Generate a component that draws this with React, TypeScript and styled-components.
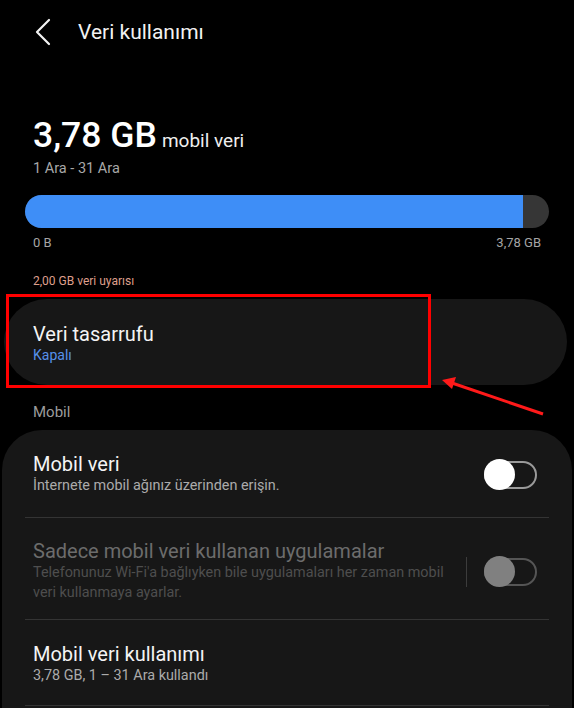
import React from 'react'
import styled, { createGlobalStyle } from 'styled-components'

const GlobalStyle = createGlobalStyle`
  html, body {
    margin: 0;
    padding: 0;
    background: #000;
  }
  body {
    font-family: Roboto, "Noto Sans", "Liberation Sans", sans-serif;
    color: #fff;
  }
`

const Screen = styled.div`
  position: relative;
  width: 574px;
  height: 708px;
  overflow: hidden;
  background: #000;
`

const Header = styled.div`
  display: flex;
  align-items: center;
  height: 64px;
  padding-left: 34px;
  gap: 26px;
`

const BackIcon = styled.svg`
  width: 18px;
  height: 28px;
`

const HeaderTitle = styled.h1`
  margin: 0;
  font-size: 21px;
  font-weight: 400;
  color: #f2f2f2;
`

const Summary = styled.div`
  padding: 51px 25px 0;
`

const Amount = styled.div`
  display: flex;
  align-items: baseline;
  gap: 5px;
  padding-left: 8px;
  height: 40px;
  line-height: 40px;
`

const Big = styled.span`
  font-size: 35.5px;
  font-weight: 500;
`

const Unit = styled.span`
  font-size: 19px;
  color: #eee;
`

const Period = styled.div`
  padding-left: 8px;
  margin-top: 5px;
  font-size: 14.5px;
  line-height: 18px;
  color: #a8a8a8;
`

const Bar = styled.div`
  display: flex;
  height: 33px;
  margin-top: 17px;
  border-radius: 17px;
  overflow: hidden;
  background: #363636;
`

const Fill = styled.div`
  height: 100%;
  background: #3e8ef7;
`

const Scale = styled.div`
  display: flex;
  justify-content: space-between;
  padding: 0 8px;
  margin-top: 6px;
  font-size: 13px;
  line-height: 18px;
  color: #a5a5a5;
`

const Warning = styled.div`
  padding-left: 8px;
  margin-top: 21px;
  font-size: 12px;
  line-height: 16px;
  color: #df9f8c;
`

const SaverCard = styled.div`
  margin: 10px 7px 0 4px;
  padding: 23px 29px 21px;
  border-radius: 43px;
  background: #171717;
`

const SaverTitle = styled.div`
  font-size: 20px;
  line-height: 24px;
  color: #f4f4f4;
`

const SaverState = styled.div`
  font-size: 14px;
  line-height: 18px;
  color: #5690ea;
`

const SectionLabel = styled.div`
  margin-top: 17px;
  padding-left: 33px;
  font-size: 15px;
  line-height: 20px;
  color: #9c9c9c;
`

const Card = styled.div`
  margin: 8px 2px 0;
  border-radius: 40px 40px 0 0;
  background: #171717;
  padding-bottom: 40px;
`

const Row = styled.div<{ $top: number; $bottom: number }>`
  display: flex;
  align-items: center;
  padding: ${p => p.$top}px 35px ${p => p.$bottom}px 31px;
`

const RowText = styled.div`
  flex: 1;
`

const RowTitle = styled.div<{ $dim?: boolean }>`
  font-size: 20px;
  line-height: 22px;
  color: ${p => (p.$dim ? '#6c6c6c' : '#f4f4f4')};
`

const RowSub = styled.div<{ $dim?: boolean }>`
  margin-top: 1px;
  font-size: 14.4px;
  line-height: 20px;
  color: ${p => (p.$dim ? '#4e4e4e' : '#ababab')};
`

const Divider = styled.div`
  height: 1px;
  margin: 0 23px;
  background: #343434;
`

const VLine = styled.div`
  width: 1px;
  height: 30px;
  margin: 0 17px 0 14px;
  background: #3c3c3c;
`

const Track = styled.div<{ $dim?: boolean }>`
  position: relative;
  width: 49px;
  height: 24px;
  border: 2px solid ${p => (p.$dim ? '#555' : '#9a9a9a')};
  border-radius: 14px;
`

const Thumb = styled.div<{ $dim?: boolean }>`
  position: absolute;
  left: -2px;
  top: -4px;
  width: 31px;
  height: 31px;
  border-radius: 50%;
  background: ${p => (p.$dim ? '#808080' : '#fff')};
`

const Highlight = styled.div`
  position: absolute;
  left: 6px;
  top: 294px;
  width: 419px;
  height: 88px;
  border: 3px solid #ff0000;
`

const Arrow = styled.svg`
  position: absolute;
  left: 0;
  top: 0;
  pointer-events: none;
`

const Toggle = ({ dim }: { dim?: boolean }) => (
  <Track $dim={dim}>
    <Thumb $dim={dim} />
  </Track>
)

export default function App() {
  const used = 95
  return (
    <Screen>
      <GlobalStyle />
      <Header>
        <BackIcon viewBox="0 0 18 28">
          <path d="M15 2 L3 14 L15 26" fill="none" stroke="#f2f2f2" strokeWidth="2.2" strokeLinecap="round" strokeLinejoin="round" />
        </BackIcon>
        <HeaderTitle>Veri kullanımı</HeaderTitle>
      </Header>

      <Summary>
        <Amount>
          <Big>3,78 GB</Big>
          <Unit>mobil veri</Unit>
        </Amount>
        <Period>1 Ara - 31 Ara</Period>
        <Bar>
          <Fill style={{ width: `${used}%` }} />
        </Bar>
        <Scale>
          <span>0 B</span>
          <span>3,78 GB</span>
        </Scale>
        <Warning>2,00 GB veri uyarısı</Warning>
      </Summary>

      <SaverCard>
        <SaverTitle>Veri tasarrufu</SaverTitle>
        <SaverState>Kapalı</SaverState>
      </SaverCard>

      <SectionLabel>Mobil</SectionLabel>

      <Card>
        <Row $top={23} $bottom={21}>
          <RowText>
            <RowTitle>Mobil veri</RowTitle>
            <RowSub>İnternete mobil ağınız üzerinden erişin.</RowSub>
          </RowText>
          <Toggle />
        </Row>
        <Divider />
        <Row $top={22} $bottom={16}>
          <RowText>
            <RowTitle $dim>Sadece mobil veri kullanan uygulamalar</RowTitle>
            <RowSub $dim>
              Telefonunuz Wi-Fi'a bağlıyken bile uygulamaları her zaman mobil veri kullanmaya ayarlar.
            </RowSub>
          </RowText>
          <VLine />
          <Toggle dim />
        </Row>
        <Divider />
        <Row $top={23} $bottom={19}>
          <RowText>
            <RowTitle>Mobil veri kullanımı</RowTitle>
            <RowSub>3,78 GB, 1 – 31 Ara kullandı</RowSub>
          </RowText>
        </Row>
        <Divider />
      </Card>

      <Highlight />
      <Arrow width="574" height="708" viewBox="0 0 574 708">
        <line x1="543" y1="414" x2="452" y2="383" stroke="#ff1a1a" strokeWidth="3" />
        <polygon points="442,380 456,377 452,389" fill="#ff1a1a" />
      </Arrow>
    </Screen>
  )
}
